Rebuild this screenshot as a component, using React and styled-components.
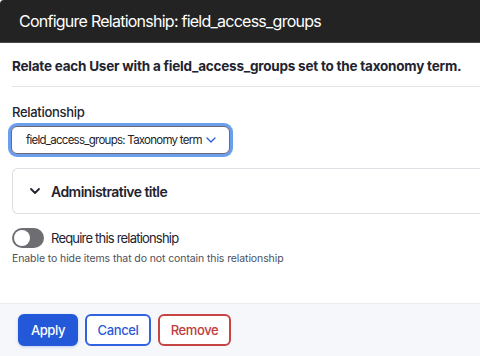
import React from "react";
import styled, { createGlobalStyle } from "styled-components";

const GlobalStyle = createGlobalStyle`
  html, body {
    margin: 0;
    padding: 0;
    background: #ffffff;
    overflow: hidden;
  }
  body {
    font-family: Inter, "Noto Sans", sans-serif;
    color: #222330;
  }
`;

const Dialog = styled.div`
  width: 520px;
  height: 356px;
  display: flex;
  flex-direction: column;
  background: #ffffff;
`;

const Header = styled.div`
  height: 43px;
  flex: none;
  box-sizing: border-box;
  display: flex;
  align-items: center;
  padding: 0 19px;
  background: #232323;
  border-bottom: 1px solid #4a4a4a;
  border-top-left-radius: 4px;
  color: #ffffff;
  font-size: 16px;
  font-weight: 400;
  letter-spacing: -0.75px;
`;

const Body = styled.div`
  flex: 1;
  padding: 0 0 0 12px;
`;

const Lead = styled.p`
  margin: 0;
  padding: 15px 0 12px;
  font-size: 13.5px;
  font-weight: 700;
  letter-spacing: -0.22px;
  color: #222330;
  border-bottom: 1px solid #e3e4e8;
`;

const Field = styled.div`
  margin-top: 17px;
  display: flex;
  flex-direction: column;
  align-items: flex-start;
`;

const Label = styled.label`
  font-size: 13px;
  font-weight: 500;
  line-height: 16px;
  letter-spacing: -0.3px;
  margin-bottom: 6px;
`;

const Select = styled.div`
  width: 219px;
  height: 28px;
  margin-left: -1px;
  box-sizing: border-box;
  display: flex;
  align-items: center;
  gap: 3px;
  padding: 0 0 0 14px;
  border: 1px solid #6b6b78;
  border-radius: 6px;
  box-shadow: 0 0 0 3px #6a9fee;
  font-size: 11.5px;
  letter-spacing: -0.75px;
  white-space: nowrap;
  color: #232429;
  background: #fff;
`;

const Details = styled.div`
  margin-top: 14px;
  height: 46px;
  box-sizing: border-box;
  border: 1px solid #dedfe4;
  border-right: none;
  border-radius: 6px 0 0 6px;
  display: flex;
  align-items: center;
  gap: 10px;
  padding-left: 16px;
  font-size: 14px;
  font-weight: 600;
  letter-spacing: -0.55px;
  color: #222330;
`;

const ToggleRow = styled.div`
  margin-top: 14px;
  display: flex;
  align-items: center;
  gap: 7px;
  font-size: 13px;
  letter-spacing: -0.8px;
  color: #222330;
`;

const Switch = styled.span`
  width: 32px;
  height: 20px;
  border-radius: 10px;
  background: #6e6e72;
  display: flex;
  align-items: center;
  padding-left: 2px;
  box-sizing: border-box;

  &::before {
    content: "";
    width: 16px;
    height: 16px;
    border-radius: 50%;
    background: #ffffff;
  }
`;

const Hint = styled.div`
  margin-top: 4px;
  font-size: 10.5px;
  letter-spacing: -0.1px;
  color: #4e4f5a;
`;

const Footer = styled.div`
  height: 53px;
  flex: none;
  box-sizing: border-box;
  display: flex;
  align-items: flex-start;
  gap: 7px;
  padding: 10px 0 0 18px;
  background: #f6f7fb;
  border-top: 1px solid #ececef;
`;

const Button = styled.button`
  height: 32px;
  box-sizing: border-box;
  padding: 0;
  width: ${(p) => p.$w}px;
  border-radius: 6px;
  font-family: inherit;
  font-size: 13px;
  font-weight: 500;
  letter-spacing: -0.4px;
  border: 2px solid ${(p) => p.$border};
  background: ${(p) => p.$bg};
  color: ${(p) => p.$color};
  box-shadow: ${(p) => (p.$primary ? "0 1px 3px rgba(35, 88, 217, 0.25)" : "none")};
`;

function Chevron({ color, size = 12, width = 1.4 }) {
  return (
    <svg width={size} height={size} viewBox="0 0 12 12" fill="none">
      <path d="M2 4l4 4 4-4" stroke={color} strokeWidth={width} strokeLinecap="round" strokeLinejoin="round" />
    </svg>
  );
}

export default function App() {
  return (
    <>
      <GlobalStyle />
      <Dialog>
        <Header>Configure Relationship: field_access_groups</Header>
        <Body>
          <Lead>Relate each User with a field_access_groups set to the taxonomy term.</Lead>
          <Field>
            <Label>Relationship</Label>
            <Select>
              <span>field_access_groups: Taxonomy term</span>
              <Chevron color="#2a5bd7" size={12} width={1.3} />
            </Select>
          </Field>
          <Details>
            <Chevron color="#222330" size={12} width={1.8} />
            <span>Administrative title</span>
          </Details>
          <ToggleRow>
            <Switch />
            <span>Require this relationship</span>
          </ToggleRow>
          <Hint>Enable to hide items that do not contain this relationship</Hint>
        </Body>
        <Footer>
          <Button $primary $w={60} $bg="#2358d9" $border="#2358d9" $color="#ffffff">Apply</Button>
          <Button $w={66} $bg="#ffffff" $border="#2f63e0" $color="#2a5bd7">Cancel</Button>
          <Button $w={73} $bg="#ffffff" $border="#c84343" $color="#c13b3b">Remove</Button>
        </Footer>
      </Dialog>
    </>
  );
}
